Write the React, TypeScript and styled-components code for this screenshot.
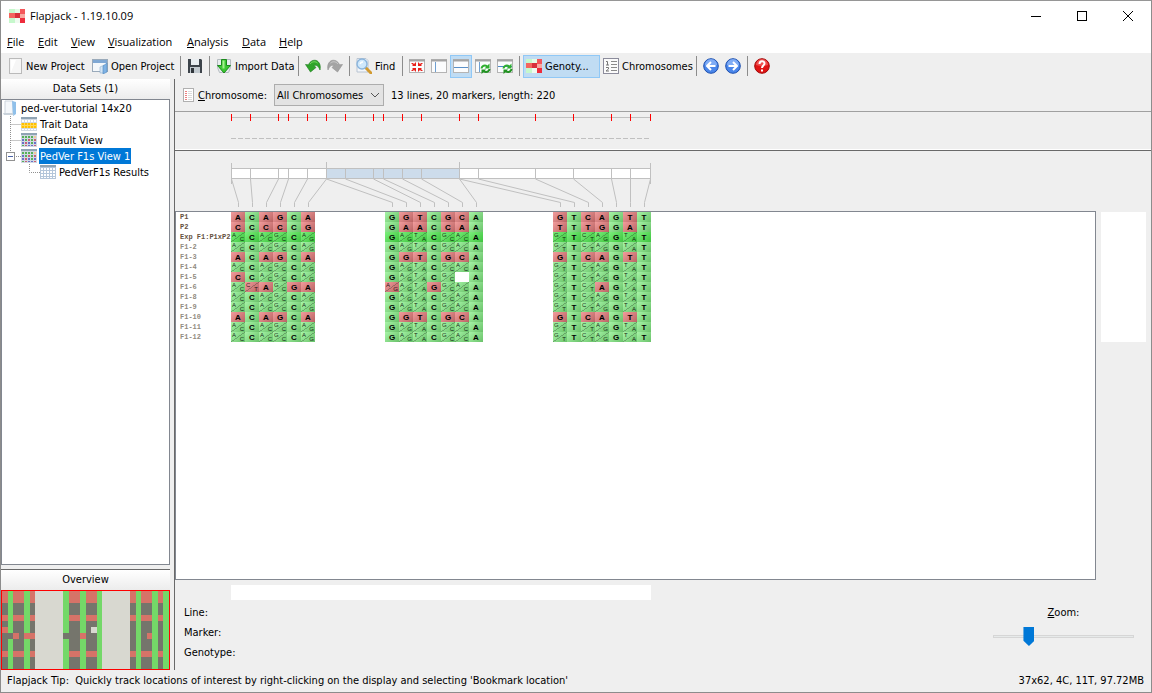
import React from "react";
import styled, { createGlobalStyle, css } from "styled-components";

const GlobalStyle = createGlobalStyle`
  * { box-sizing: border-box; }
  body { margin: 0; background: #efefef; }
  body, button, select, input { font-family: "DejaVu Sans Condensed", "DejaVu Sans", sans-serif; font-size: 11px; color: #000; }
  button { border: 0; background: none; padding: 0; margin: 0; }
  svg { display: block; flex: none; }
`;

const Window = styled.div`
  display: flex;
  flex-direction: column;
  min-height: 100vh;
  background: #efefef;
  border: 1px solid #8c8c8c;
  border-top: 1px solid #969696;
`;
const TitleBar = styled.header`
  display: flex;
  align-items: center;
  height: 29px;
  background: #fff;
  padding-left: 8px;
  gap: 5px;
`;
const Title = styled.h1`
  flex: 1;
  margin: 0;
  font: 400 11px "Open Sans", "Noto Sans", sans-serif;
`;
const CaptionGroup = styled.div`
  display: flex;
`;
const CaptionButton = styled.button`
  width: 46px;
  height: 28px;
  display: grid;
  place-items: center;
`;
const MenuBar = styled.nav`
  display: flex;
  align-items: center;
  height: 23px;
  padding-left: 6px;
  gap: 12px;
  background: #fff;
`;
const MenuItem = styled.button<{ $w: number }>`
  width: ${(p) => p.$w}px;
  text-align: left;
  white-space: nowrap;
  font: 400 11px/18px "Open Sans", "Noto Sans", sans-serif;
`;
const Toolbar = styled.div`
  display: flex;
  align-items: center;
  height: 26px;
  padding-left: 3px;
`;
const ToolButton = styled.button<{ $w?: number; $on?: boolean }>`
  display: flex;
  align-items: center;
  gap: 3px;
  width: ${(p) => p.$w || 22}px;
  height: 23px;
  padding: 0 2px;
  white-space: nowrap;
  border: 1px solid ${(p) => (p.$on ? "#90c8f6" : "transparent")};
  background: ${(p) => (p.$on ? "#c0dcf3" : "transparent")};
`;
const Separator = styled.span`
  width: 1px;
  height: 20px;
  margin: 0 3px;
  background: #8c8c8c;
`;
const Main = styled.main`
  flex: 1;
  display: flex;
  gap: 4px;
`;
const Side = styled.aside`
  width: 169px;
  display: flex;
  flex-direction: column;
`;
const PanelHead = styled.h2<{ $line?: boolean }>`
  margin: 0;
  height: ${(p) => (p.$line ? 21 : 20)}px;
  font-weight: 400;
  font-size: 11px;
  line-height: 20px;
  text-align: center;
  background: linear-gradient(#fff, #ececec);
  border-top: ${(p) => (p.$line ? "1px solid #696969" : "0")};
`;
const Tree = styled.ul`
  flex: 1;
  margin: 0 0 4px;
  padding: 0;
  list-style: none;
  background: #fff;
  border: 1px solid #828790;
`;
const TreeRow = styled.li`
  display: flex;
  align-items: center;
  height: 16px;
  white-space: nowrap;
`;
const TreeText = styled.span<{ $on?: boolean }>`
  height: 16px;
  margin-left: 2px;
  padding: 0 1px;
  line-height: 17px;
  ${(p) => p.$on && css`background: #0078d7; color: #fff;`}
`;
const Overview = styled.div`
  height: 80px;
  border: 1px solid #f00;
  background: #d8d8d0;
  svg { width: 100%; height: 100%; }
`;
const Content = styled.section`
  flex: 1;
  display: flex;
  flex-direction: column;
  min-width: 0;
  border-left: 1px solid #696969;
`;
const ChromosomeBar = styled.div`
  display: flex;
  align-items: center;
  height: 33px;
  padding-left: 5px;
  border-bottom: 1px solid #a0a0a0;
`;
const ChromosomeLabel = styled.label`
  width: 76px;
  margin-left: 2px;
`;
const SelectBox = styled.div`
  display: grid;
  width: 110px;
  height: 22px;
  align-items: center;
  > * { grid-area: 1 / 1; }
  svg { justify-self: end; margin-right: 4px; pointer-events: none; }
`;
const Select = styled.select`
  appearance: none;
  height: 22px;
  padding: 0 2px;
  background: #e3e3e3;
  border: 1px solid #adadad;
  border-radius: 0;
`;
const Summary = styled.span`
  margin-left: 7px;
`;
const GenomeStrip = styled.div`
  height: 39px;
  padding-left: 56px;
  border-bottom: 1px solid #696969;
  box-shadow: inset 0 -1px 0 #fff;
`;
const MapStrip = styled.div`
  height: 60px;
  padding-left: 56px;
`;
const CanvasRow = styled.div`
  flex: 1;
  display: flex;
  gap: 5px;
  padding-right: 5px;
`;
const Canvas = styled.div`
  flex: 1;
  background: #fff;
  border: 1px solid #828790;
`;
const Preview = styled.div`
  width: 45px;
  height: 130px;
  margin-top: 1px;
  background: #fff;
`;
const Matrix = styled.table`
  border-collapse: collapse;
  table-layout: fixed;
  width: 475px;
  th, td { padding: 0; height: 10px; }
`;
const LineName = styled.th<{ $strong: boolean }>`
  font: 700 7px/10px "Liberation Mono", monospace;
  text-align: left;
  white-space: nowrap;
  color: ${(p) => (p.$strong ? "#66523f" : "#918b80")};
  div { height: 10px; padding-left: 4px; }
`;

const shades: Record<string, string> = {
  red: "#f29c9c, #b96464",
  green: "#a6f4a6, #6ac26a",
  vivid: "#7cf07c, #3fc43f",
};
const Allele = styled.div<{ $tone: string; $het: boolean }>`
  display: flex;
  height: 10px;
  overflow: hidden;
  font: 700 8px/11px "Liberation Sans", sans-serif;
  justify-content: center;
  background: linear-gradient(135deg, ${(p) => shades[p.$tone]});
  ${(p) =>
    p.$het &&
    css`
      justify-content: space-between;
      padding: 0 1px;
      font: 400 6px/6px "Liberation Sans", sans-serif;
      color: rgba(0, 0, 0, 0.85);
      background: linear-gradient(to bottom right, transparent 47%, rgba(40, 60, 40, 0.35) 48%, rgba(40, 60, 40, 0.35) 52%, transparent 53%),
        linear-gradient(135deg, ${shades[p.$tone]});
      span:last-child { align-self: flex-end; }
    `}
`;
const Footer = styled.div`
  padding: 5px 17px 7px 9px;
`;
const SelectionStrip = styled.div`
  width: 420px;
  max-width: 100%;
  height: 15px;
  margin: 0 0 3px 47px;
  background: #fff;
`;
const FooterRow = styled.div`
  display: flex;
  justify-content: space-between;
`;
const Fields = styled.dl`
  margin: 0;
  dt { height: 20px; line-height: 20px; }
`;
const ZoomBox = styled.div`
  display: flex;
  flex-direction: column;
  align-items: center;
  width: 141px;
  label { line-height: 20px; }
`;
const Slider = styled.input`
  appearance: none;
  width: 141px;
  height: 19px;
  margin: 4px 0 0;
  background: transparent;
  &::-webkit-slider-runnable-track {
    height: 3px;
    background: #e7eaea;
    border: 1px solid #d6d6d6;
  }
  &::-webkit-slider-thumb {
    appearance: none;
    width: 11px;
    height: 19px;
    margin-top: -9px;
    background: #0078d7;
    clip-path: polygon(0 0, 100% 0, 100% 72%, 50% 100%, 0 72%);
  }
`;
const StatusBar = styled.footer`
  display: flex;
  justify-content: space-between;
  height: 22px;
  padding: 0 7px 0 6px;
  line-height: 22px;
`;
const Tip = styled.span`
  white-space: pre;
`;

/* ---------- data ---------- */
type Row = { name: string; cells: string[] };
const P1 = "A C A G C A|G G T C G C A|G T C A G T T";
const P2 = "C C C C C G|G A A C C A A|T T T G G A T";
const F1 = "AC C AC GC C AG|G AG TA C GC AC A|GT T CT AG G TA T";
const F1_5 = "C C AC GC C AG|G AG TA C GC - A|GT T CT AG G TA T";
const F1_6 = "AC CT A GC G A|AG AG TA G GC AC A|GT T CT A G TA T";
const split = (s: string) => s.replace(/\|/g, " _ _ _ _ _ ").split(" ");
const rows: Row[] = (
  [
    ["P1", P1], ["P2", P2], ["Exp F1:P1xP2", F1], ["F1-2", F1], ["F1-3", P1], ["F1-4", F1], ["F1-5", F1_5],
    ["F1-6", F1_6], ["F1-8", F1], ["F1-9", F1], ["F1-10", P1], ["F1-11", F1], ["F1-12", F1],
  ] as [string, string][]
).map(([name, s]) => ({ name, cells: split(s) }));
const expected = split(F1);

const firstMarkers = [0, 19, 47, 57, 76, 95];
const secondMarkers = [95, 114, 142, 152, 171, 190, 228];
const thirdMarkers = [228, 247, 304, 342, 380, 399, 419];
const links = [
  ...firstMarkers.map((x, i) => [x, 7 + i * 14]),
  ...secondMarkers.map((x, i) => [x, 161 + i * 14]),
  ...thirdMarkers.map((x, i) => [x, 329 + i * 14]),
];

/* ---------- icons ---------- */
const Svg = (p: React.SVGProps<SVGSVGElement>) => <svg width="16" height="16" viewBox="0 0 16 16" aria-hidden="true" {...p} />;

const LogoIcon = () => (
  <Svg>
    <rect y="1" width="16" height="14" fill="#c6f8cc" />
    <rect x="6" y="1" width="5" height="4" fill="#e4fbe6" />
    <rect x="11" y="1" width="5" height="5" fill="#f4565a" />
    <rect y="5" width="6" height="5" fill="#f4645e" />
    <rect x="6" y="5" width="5" height="5" fill="#d8303a" />
    <rect x="11" y="6" width="5" height="4" fill="#f8a8a0" />
    <rect x="6" y="10" width="5" height="5" fill="#effaf0" />
    <rect x="11" y="10" width="5" height="5" fill="#ee2c3c" />
  </Svg>
);
const PageIcon = () => (
  <Svg><rect x="2.5" y=".5" width="12" height="15" fill="#f6f6f6" stroke="#bababa" /><path d="M4 14V2h5z" fill="#fff" /></Svg>
);
const OpenIcon = () => (
  <Svg>
    <rect x=".5" y="1.5" width="15" height="12" fill="#f4f8fb" stroke="#9aaaba" />
    <path d="M1 2h14v3H1z" fill="#7fa8d4" />
    <path d="M8 9l4-2v8H8z" fill="#d4e6f6" stroke="#8fb0d0" strokeWidth=".6" />
    <path d="M11 8l4-3v9l-4 2z" fill="#7fb2e4" stroke="#4f86be" strokeWidth=".6" />
  </Svg>
);
const SaveIcon = () => (
  <Svg>
    <path d="M1 1h13l1 1v13H1z" fill="#3d444b" />
    <rect x="4" y="1" width="8" height="6" fill="#e9eef2" />
    <rect x="3" y="9" width="10" height="6" fill="#c2cad0" />
    <rect x="4" y="10" width="3" height="5" fill="#30363c" />
  </Svg>
);
const ImportIcon = () => (
  <Svg>
    <path d="M1.5 1.5h13v8l-2 5h-9l-2-5z" fill="#e8ecee" stroke="#b4bcc0" />
    <path d="M5.5 1.5h5v6h4L8 15 1.5 7.500h4z" fill="#3cc832" stroke="#1c8a1c" />
    <path d="M7.500 2.500v8" stroke="#a5f08e" strokeWidth="2" />
  </Svg>
);
const CurveArrow = ({ back }: { back?: boolean }) => (
  <Svg>
    <g transform={back ? undefined : "matrix(-1 0 0 1 16 0)"}>
      <path
        d="M.5 6.500L3.500 6.800C5 3 8.500 1.500 11.500 2.600C14.500 4 16 7.500 15 12C13.500 8.500 12 6.700 9 7.500L11 9.500L5.500 14z"
        fill={back ? "#2fa52a" : "#a4a4a4"} stroke={back ? "#1c7a1c" : "#909090"} strokeWidth=".6"
      />
      <path d="M5 6C7 3.500 10 3 12.500 5" fill="none" stroke={back ? "#7fe068" : "#cdcdcd"} />
    </g>
  </Svg>
);
const FindIcon = () => (
  <Svg>
    <path d="M1 .5h9l2 2V14H1z" fill="#f3f6fa" stroke="#b8c4d2" />
    <path d="M10 10l5 5" stroke="#d29a30" strokeWidth="3" strokeLinecap="round" />
    <circle cx="6" cy="6" r="5" fill="#cfe8fb" stroke="#8ab4dc" strokeWidth="1.4" />
    <path d="M4 6a3 3 0 0 1 3-2" stroke="#fff" fill="none" strokeWidth="1.3" />
  </Svg>
);
const Pane = ({ children }: { children?: React.ReactNode }) => (
  <Svg>
    <rect x=".5" y="1.5" width="15" height="13" fill="#fbfcfd" stroke="#b4b4b4" />
    <path d="M0 2.500h16" stroke="#a4a4a4" strokeWidth="2" />
    {children}
  </Svg>
);
const Refresh = () => (
  <g>
    <path d="M5.500 10.500C6 7 10 5.500 12.500 7.500L14.500 5.500V10.500H9.500L11 9C9.500 8 8 9 7.500 10.500z" fill="#2fae2f" />
    <path d="M15.500 11C15 15 11 16 8.500 14.300L6.500 16V11.500H11L10 12.700C11.500 13.500 13 12.500 13.500 11z" fill="#229322" />
  </g>
);
const CollapseIcon = () => (
  <Pane>
    <path d="M2 5h2l1 1 2-2v4H3l1-1zM14 5h-2l-1 1-2-2v4h4l-1-1zM2 13h2l1-1 2 2v-4H3l1 1zM14 13h-2l-1-1-2 2v-4h4l-1 1z" fill="#e8201a" />
  </Pane>
);
const NumberedIcon = () => (
  <Svg>
    <rect x=".5" y=".5" width="15" height="15" fill="#fbfbfb" stroke="#8c8c9c" />
    <path d="M3 3.500h1.500V7M3 7h3M3 9.500h2.500V11L3 13h3" fill="none" stroke="#777" />
    <path d="M8 3.500h6M8 6.500h6M8 9.500h6M8 12.500h6" stroke="#8a8a8a" />
  </Svg>
);
const RoundArrow = ({ left }: { left?: boolean }) => (
  <Svg>
    <circle cx="8" cy="8" r="7.3" fill="#4a86ea" stroke="#1d4fae" />
    <path d="M2 7a6 6 0 0 1 12 0q-6 2-12 0" fill="#a3c6fb" opacity=".6" />
    <path transform={left ? undefined : "rotate(180 8 8)"} d="M12.500 8H4.500M8 4L4 8l4 4" fill="none" stroke="#fff" strokeWidth="2" />
  </Svg>
);
const HelpIcon = () => (
  <Svg>
    <circle cx="8" cy="8" r="7.3" fill="#e01414" stroke="#a00808" />
    <path d="M2 7a6 6 0 0 1 12 0q-6 2-12 0" fill="#ff8a8a" opacity=".5" />
    <path d="M5.500 6c0-3.500 5-3.500 5-.5C10.500 7.500 8 7.500 8 10M8 11.500v2" fill="none" stroke="#fff" strokeWidth="2" />
  </Svg>
);
const LedgerIcon = () => (
  <Svg>
    <rect x="3.5" y="1.5" width="10" height="13" fill="#fff" stroke="#b0b0b0" />
    <path d="M5 4.500h2M5 6.500h2M5 8.500h2M5 10.500h2M5 12.500h2" stroke="#ec8080" />
    <path d="M8 4.500h4M8 6.500h4M8 8.500h4M8 10.500h4M8 12.500h4" stroke="#dcdcdc" />
  </Svg>
);
const FolderIcon = () => (
  <Svg>
    <path d="M3 1h8v13H3z" fill="#f4f7fa" stroke="#ccd4dc" />
    <path d="M10 1l4 1v12l-3 2z" fill="#8fc0ea" />
    <path d="M1 13h9l2 2H2z" fill="#c9d2da" />
  </Svg>
);
const palette = ["#58b058", "#c86078", "#6870c8", "#f0c898"];
const GridIcon = ({ kind }: { kind: "trait" | "view" | "plain" }) => {
  const paint = (r: number, c: number) => {
    if (kind === "view") return palette[[0, 0, 0, 0, 3, 2, 0, 1, 0, 1, 2, 1, 2, 0, 2, 0, 1, 2, 2, 1][r * 5 + c]];
    return kind === "trait" && (r === 1 || r === 2) ? "#ffc000" : "#fff";
  };
  return (
    <Svg>
      <rect y="1" width="16" height="14" fill={kind === "plain" ? "#b4c6da" : "#d0d8e2"} />
      <rect y="1" width="16" height="2" fill="#90a4b4" />
      {kind === "trait" && <rect y="7" width="16" height="5" fill="#ffd858" />}
      {[0, 1, 2, 3].map((r) =>
        [0, 1, 2, 3, 4].map((c) => (
          <rect key={`${r}${c}`} x={1 + c * 3} y={4 + r * 3} width="2" height={r === 3 ? 1 : 2} fill={paint(r, c)} />
        ))
      )}
    </Svg>
  );
};

const Branch = ({ deep, last, box }: { deep?: boolean; last?: boolean; box?: boolean }) => (
  <svg width={deep ? 38 : 19} height="16" aria-hidden="true">
    <path
      d={deep ? "M27.500 0V8.500H38" : last ? "M8.500 0V8.500H19" : "M8.500 0V16M8.500 8.500H19"}
      fill="none" stroke="#909090" strokeDasharray="1 1"
    />
    {box && (
      <g>
        <rect x="4.5" y="4.5" width="8" height="8" fill="#fff" stroke="#919191" />
        <path d="M6 8.500h5" stroke="#4b63a7" />
      </g>
    )}
  </svg>
);

const overviewColor = (c: string, i: number) =>
  c === "_" || c === "-" ? "#d8d8d0" : c.length === 2 ? "#75756c" : c === expected[i] ? "#74d868" : "#d67368";
const tone = (row: number, c: string, i: number) =>
  row === 2 ? "vivid" : c === expected[i] ? "green" : "red";

const menus: [string, number][] = [["File", 19], ["Edit", 21], ["View", 25], ["Visualization", 67], ["Analysis", 43], ["Data", 25], ["Help", 26]];

export default function App() {
  return (
    <Window>
      <GlobalStyle />
      <TitleBar>
        <LogoIcon />
        <Title>Flapjack - 1.19.10.09</Title>
        <CaptionGroup>
          <CaptionButton aria-label="Minimize"><svg width="10" height="10"><path d="M0 5.500h10" stroke="#000" /></svg></CaptionButton>
          <CaptionButton aria-label="Maximize"><svg width="10" height="10"><rect x=".5" y=".5" width="9" height="9" fill="none" stroke="#000" /></svg></CaptionButton>
          <CaptionButton aria-label="Close"><svg width="10" height="10"><path d="M0 0l10 10M10 0L0 10" stroke="#000" /></svg></CaptionButton>
        </CaptionGroup>
      </TitleBar>
      <MenuBar>
        {menus.map(([m, w]) => (
          <MenuItem key={m} $w={w}><u>{m[0]}</u>{m.slice(1)}</MenuItem>
        ))}
      </MenuBar>
      <Toolbar>
        <ToolButton $w={85}><PageIcon />New Project</ToolButton>
        <ToolButton $w={88}><OpenIcon />Open Project</ToolButton>
        <Separator />
        <ToolButton aria-label="Save"><SaveIcon /></ToolButton>
        <Separator />
        <ToolButton $w={82}><ImportIcon />Import Data</ToolButton>
        <Separator />
        <ToolButton aria-label="Undo"><CurveArrow back /></ToolButton>
        <ToolButton aria-label="Redo"><CurveArrow /></ToolButton>
        <Separator />
        <ToolButton $w={46}><FindIcon />Find</ToolButton>
        <Separator />
        <ToolButton aria-label="Collapse panels"><CollapseIcon /></ToolButton>
        <ToolButton aria-label="Left pane"><Pane><path d="M4.500 4v10" stroke="#6f9fd0" /></Pane></ToolButton>
        <ToolButton $on aria-label="Split pane"><Pane><path d="M1 9.500h14" stroke="#5a90c8" /></Pane></ToolButton>
        <ToolButton aria-label="Refresh left pane"><Pane><path d="M4.500 4v10" stroke="#6f9fd0" /><Refresh /></Pane></ToolButton>
        <ToolButton aria-label="Refresh split pane"><Pane><path d="M1 8.500h14" stroke="#4a88c8" /><Refresh /></Pane></ToolButton>
        <Separator />
        <ToolButton $w={77} $on><LogoIcon />Genoty...</ToolButton>
        <ToolButton $w={93}><NumberedIcon />Chromosomes</ToolButton>
        <Separator />
        <ToolButton aria-label="Back"><RoundArrow left /></ToolButton>
        <ToolButton aria-label="Forward"><RoundArrow /></ToolButton>
        <Separator />
        <ToolButton aria-label="Help contents"><HelpIcon /></ToolButton>
      </Toolbar>
      <Main>
        <Side>
          <PanelHead>Data Sets (1)</PanelHead>
          <Tree>
            <TreeRow><FolderIcon /><TreeText>ped-ver-tutorial 14x20</TreeText></TreeRow>
            <TreeRow><Branch /><GridIcon kind="trait" /><TreeText>Trait Data</TreeText></TreeRow>
            <TreeRow><Branch /><GridIcon kind="view" /><TreeText>Default View</TreeText></TreeRow>
            <TreeRow><Branch last box /><GridIcon kind="view" /><TreeText $on>PedVer F1s View 1</TreeText></TreeRow>
            <TreeRow><Branch deep /><GridIcon kind="plain" /><TreeText>PedVerF1s Results</TreeText></TreeRow>
          </Tree>
          <PanelHead $line>Overview</PanelHead>
          <Overview>
            <svg viewBox="0 0 30 13" preserveAspectRatio="none" shapeRendering="crispEdges" role="img" aria-label="Genotype overview">
              {rows.map((r, y) => r.cells.map((c, x) => (
                <rect key={`${x}-${y}`} x={x} y={y} width="1" height="1" fill={overviewColor(c, x)} />
              )))}
            </svg>
          </Overview>
        </Side>
        <Content>
          <ChromosomeBar>
            <LedgerIcon />
            <ChromosomeLabel htmlFor="chromosome"><u>C</u>hromosome:</ChromosomeLabel>
            <SelectBox>
              <Select id="chromosome"><option>All Chromosomes</option></Select>
              <svg width="10" height="6" aria-hidden="true"><path d="M1 1l4 4 4-4" fill="none" stroke="#555" /></svg>
            </SelectBox>
            <Summary>13 lines, 20 markers, length: 220</Summary>
          </ChromosomeBar>
          <GenomeStrip>
            <svg width="421" height="36" aria-hidden="true">
              <path d="M0 5.500h420" stroke="#c0c0c0" />
              <path d="M0 26.500h420" stroke="#c0c0c0" strokeDasharray="5 2" />
              {links.map(([x], i) => <path key={i} d={`M${x + 0.5} 2v7`} stroke="#f00" />)}
            </svg>
          </GenomeStrip>
          <MapStrip>
            <svg width="421" height="60" aria-hidden="true">
              <rect x="0" y="17" width="420" height="11" fill="#fff" />
              <rect x="95" y="17" width="133" height="11" fill="#cddceb" />
              <g stroke="#c0c0c0" fill="none">
                <path d="M0 17.500h420M0 27.500h420M.5 12v21M419.500 12v21M95.500 11v7M228.500 11v7" />
                {links.map(([x, to], i) => (
                  <path key={i} d={`M${x + 0.5} 17v11L${to + 0.5} 51.500V56`} />
                ))}
              </g>
            </svg>
          </MapStrip>
          <CanvasRow>
            <Canvas>
              <Matrix>
                <colgroup>
                  <col width="55" />
                  {expected.map((_, i) => <col key={i} width="14" />)}
                </colgroup>
                <tbody>
                  {rows.map((r, y) => (
                    <tr key={r.name}>
                      <LineName scope="row" $strong={y < 3}><div>{r.name}</div></LineName>
                      {r.cells.map((c, x) => (
                        <td key={x}>
                          {c !== "_" && c !== "-" && (
                            <Allele $tone={tone(y, c, x)} $het={c.length === 2}>
                              {c.split("").map((a, i) => <span key={i}>{a}</span>)}
                            </Allele>
                          )}
                        </td>
                      ))}
                    </tr>
                  ))}
                </tbody>
              </Matrix>
            </Canvas>
            <Preview />
          </CanvasRow>
          <Footer>
            <SelectionStrip />
            <FooterRow>
              <Fields><dt>Line:</dt><dt>Marker:</dt><dt>Genotype:</dt></Fields>
              <ZoomBox>
                <label htmlFor="zoom"><u>Z</u>oom:</label>
                <Slider id="zoom" type="range" min="0" max="100" defaultValue="23" />
              </ZoomBox>
            </FooterRow>
          </Footer>
        </Content>
      </Main>
      <StatusBar>
        <Tip>{"Flapjack Tip:  Quickly track locations of interest by right-clicking on the display and selecting 'Bookmark location'"}</Tip>
        <span>37x62, 4C, 11T, 97.72MB</span>
      </StatusBar>
    </Window>
  );
}
